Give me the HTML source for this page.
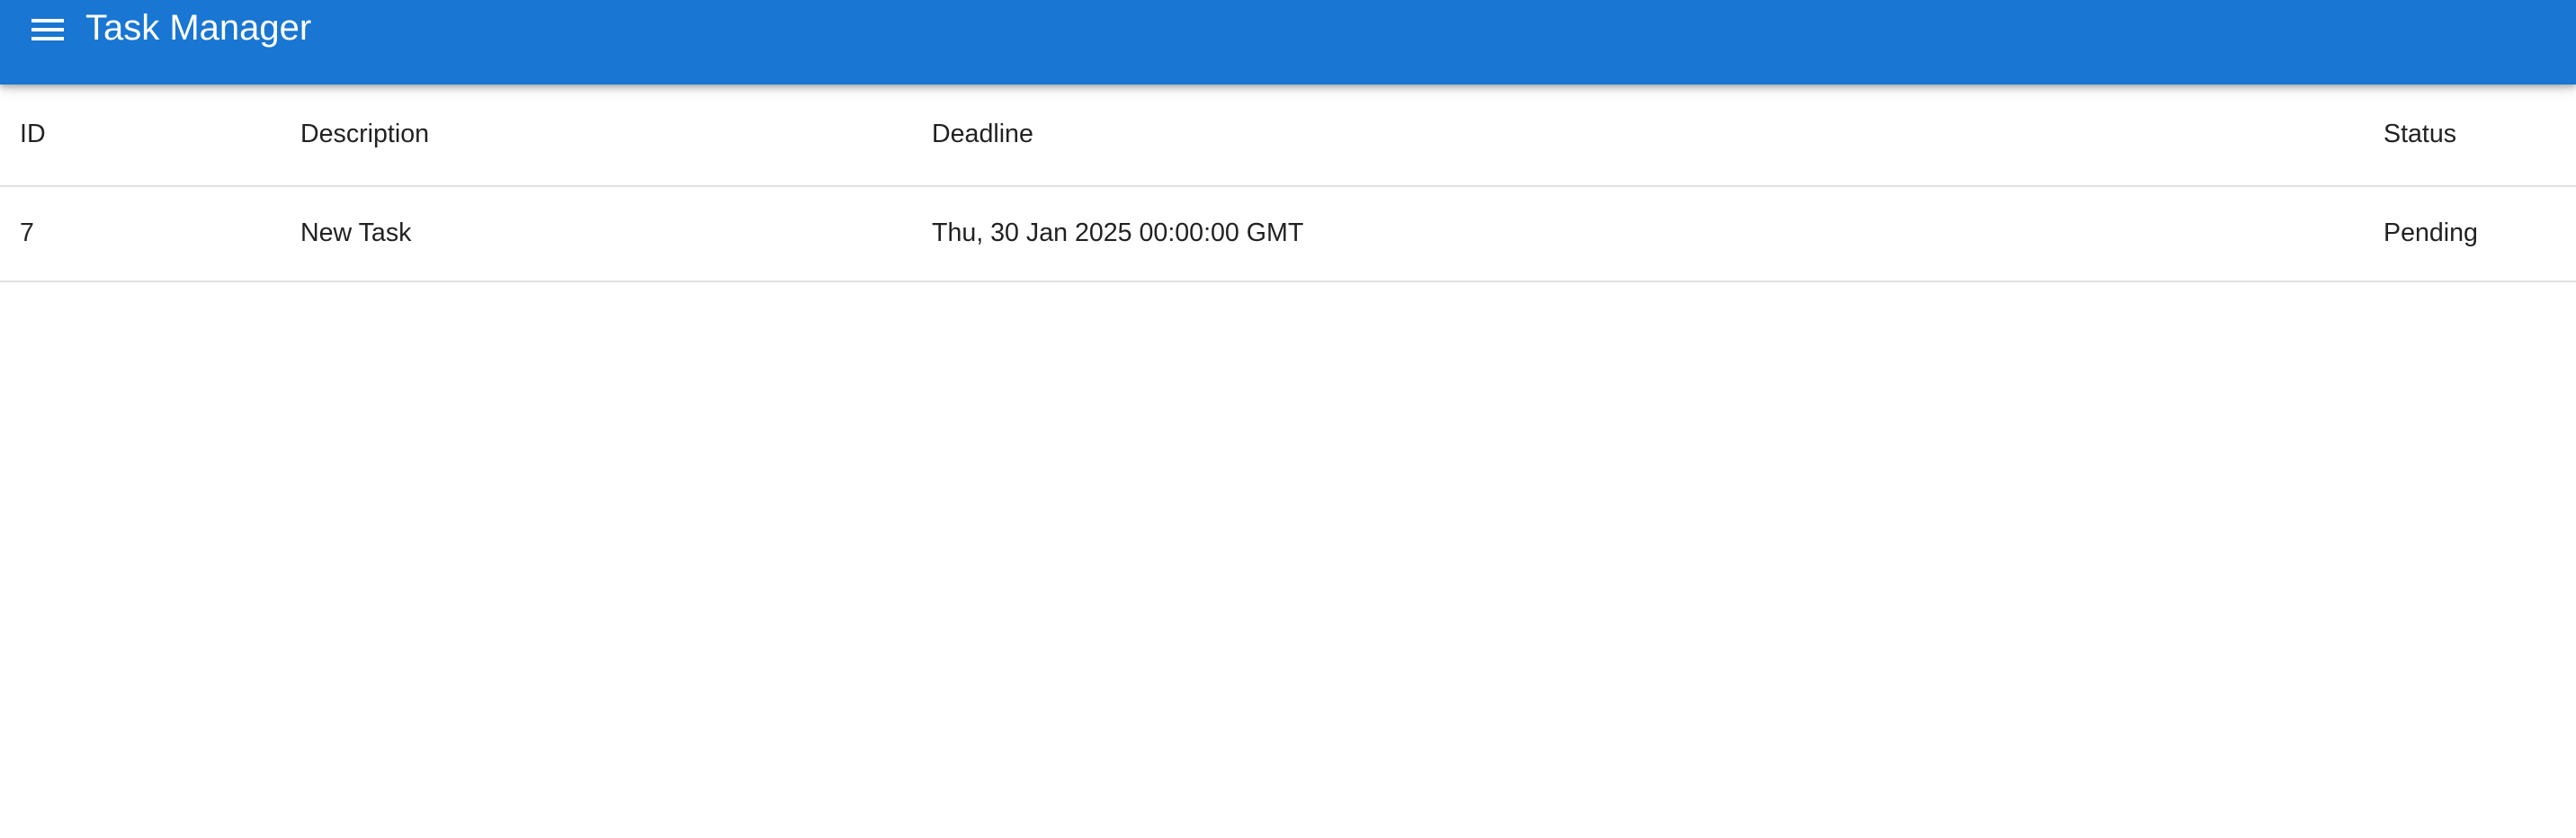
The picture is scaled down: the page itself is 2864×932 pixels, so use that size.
<!DOCTYPE html>
<html><head><meta charset="utf-8"><style>
html,body{margin:0;padding:0;background:#fff;width:2864px;height:932px;overflow:hidden;font-family:"Liberation Sans",Arial,sans-serif;}
.bar{position:absolute;left:0;top:0;width:2864px;height:94px;background:#1976d2;box-shadow:0 3px 6px rgba(0,0,0,0.25),0 6px 14px rgba(0,0,0,0.12);z-index:2}
.hb{position:absolute;left:35px;width:36px;height:4px;background:#fff}
.title{position:absolute;left:95px;top:8px;font-size:40px;line-height:46px;color:#fff;white-space:nowrap}
.t{position:absolute;font-size:28.6px;line-height:32px;color:rgba(0,0,0,0.87);white-space:nowrap}
.line{position:absolute;left:0;width:2864px;height:2px;background:#e0e0e0}
</style></head><body>
<div class="bar">
<div class="hb" style="top:21px"></div>
<div class="hb" style="top:31px"></div>
<div class="hb" style="top:41px"></div>
<div class="title">Task Manager</div>
</div>
<div class="t" style="left:22px;top:133px">ID</div>
<div class="t" style="left:334px;top:133px">Description</div>
<div class="t" style="left:1036px;top:133px">Deadline</div>
<div class="t" style="left:2650px;top:133px">Status</div>
<div class="line" style="top:206px"></div>
<div class="t" style="left:22px;top:243px">7</div>
<div class="t" style="left:334px;top:243px">New Task</div>
<div class="t" style="left:1036px;top:243px">Thu, 30 Jan 2025 00:00:00 GMT</div>
<div class="t" style="left:2650px;top:243px">Pending</div>
<div class="line" style="top:312px"></div>
</body></html>
